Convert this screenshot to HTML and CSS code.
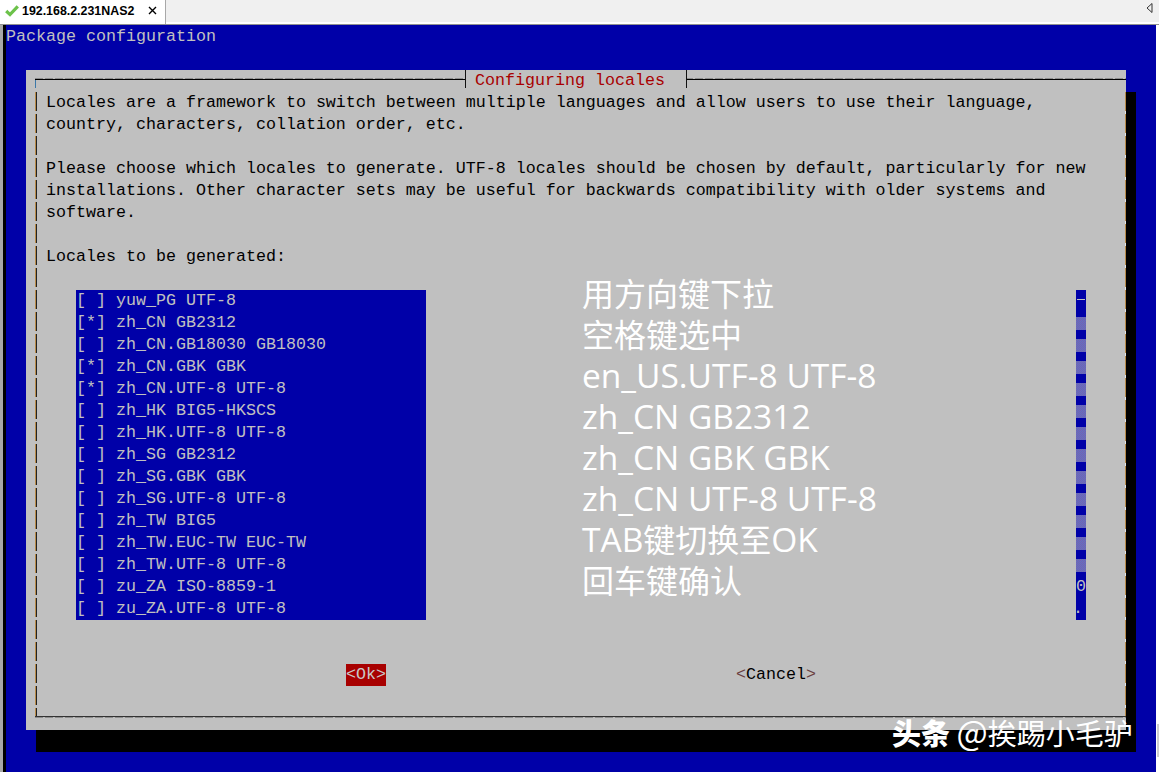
FILE: index.html
```html
<!DOCTYPE html>
<html lang="zh">
<head>
<meta charset="utf-8">
<title>192.168.2.231NAS2</title>
<link rel="stylesheet" href="styles.css">
</head>
<body>
<div class="tabbar">
  <div class="tab">
    <svg class="check" width="14" height="12" viewBox="0 0 14 12"><path d="M1.2 6 L5 9.6 L12.8 1.4" fill="none" stroke="#6cc24a" stroke-width="3.2"/></svg>
    <span class="tab-name">192.168.2.231NAS2</span>
    <svg class="close" width="9" height="9" viewBox="0 0 9 9"><path d="M1 1 L8 8 M8 1 L1 8" stroke="#000" stroke-width="1.4"/></svg>
  </div>
  <div class="tab-spacer"></div>
  <svg class="tab-arrow" width="7" height="10" viewBox="0 0 7 10"><path d="M6 .5 V9.5 L1 5 Z" fill="none" stroke="#333"/></svg>
</div>
<div class="window">
  <div class="terminal">
    <div class="pkg">Package configuration</div>
    <div class="dialog">
      <div class="frame">
        <div class="title"><span class="title-text">Configuring locales</span></div>
        <div class="msg">
          <div class="line">Locales are a framework to switch between multiple languages and allow users to use their language,</div>
          <div class="line">country, characters, collation order, etc.</div>
          <div class="line">&nbsp;</div>
          <div class="line">Please choose which locales to generate. UTF-8 locales should be chosen by default, particularly for new</div>
          <div class="line">installations. Other character sets may be useful for backwards compatibility with older systems and</div>
          <div class="line">software.</div>
          <div class="line">&nbsp;</div>
          <div class="line">Locales to be generated:</div>
        </div>
        <div class="list-row">
          <div class="list">
            <div class="line">[ ] yuw_PG UTF-8</div>
            <div class="line">[*] zh_CN GB2312</div>
            <div class="line">[ ] zh_CN.GB18030 GB18030</div>
            <div class="line">[*] zh_CN.GBK GBK</div>
            <div class="line">[*] zh_CN.UTF-8 UTF-8</div>
            <div class="line">[ ] zh_HK BIG5-HKSCS</div>
            <div class="line">[ ] zh_HK.UTF-8 UTF-8</div>
            <div class="line">[ ] zh_SG GB2312</div>
            <div class="line">[ ] zh_SG.GBK GBK</div>
            <div class="line">[ ] zh_SG.UTF-8 UTF-8</div>
            <div class="line">[ ] zh_TW BIG5</div>
            <div class="line">[ ] zh_TW.EUC-TW EUC-TW</div>
            <div class="line">[ ] zh_TW.UTF-8 UTF-8</div>
            <div class="line">[ ] zu_ZA ISO-8859-1</div>
            <div class="line">[ ] zu_ZA.UTF-8 UTF-8</div>
          </div>
          <div class="notes">
            <div class="note">用方向键下拉</div>
            <div class="note">空格键选中</div>
            <div class="note lat">en_US.UTF-8 UTF-8</div>
            <div class="note lat">zh_CN GB2312</div>
            <div class="note lat">zh_CN GBK GBK</div>
            <div class="note lat">zh_CN UTF-8 UTF-8</div>
            <div class="note"><span class="lat">TAB</span>键切换至<span class="lat">OK</span></div>
            <div class="note">回车键确认</div>
          </div>
          <div class="scroll">
            <div class="cell"><span class="tick"></span></div>
            <div class="cell shade"></div><div class="cell shade"></div><div class="cell shade"></div>
            <div class="cell shade"></div><div class="cell shade"></div><div class="cell shade"></div>
            <div class="cell shade"></div><div class="cell shade"></div><div class="cell shade"></div>
            <div class="cell shade"></div><div class="cell shade"></div><div class="cell shade"></div>
            <div class="cell digit">0</div>
            <div class="cell digit dot">.</div>
          </div>
        </div>
        <div class="buttons">
          <span class="btn btn-ok">&lt;Ok&gt;</span>
          <span class="btn btn-cancel"><i>&lt;</i>Cancel<i>&gt;</i></span>
        </div>
      </div>
    </div>
  </div>
  <div class="thumb"></div>
  <div class="watermark"><b>头条</b> <span class="at">@</span>挨踢小毛驴</div>
</div>
</body>
</html>
```
FILE: styles.css
```css
* { box-sizing: border-box; }
html, body { margin: 0; padding: 0; }
body {
  width: 1159px; height: 772px; overflow: hidden;
  background: #f0f0f0;
  font-family: "Liberation Mono", "DejaVu Sans Mono", monospace;
}
.tabbar {
  height: 25px; display: flex; align-items: flex-start;
  background: #f0f0f0; border-bottom: 1px solid #909090;
  box-shadow: inset 0 -2px 0 #fff;
}
.tab {
  width: 166px; height: 24px; background: #fff; border-right: 1px solid #a8a8a8;
  display: flex; align-items: center; padding: 0 0 3px 5px;
}
.check { flex: none; }
.tab-name {
  margin-left: 3px; width: 126px; white-space: nowrap;
  font: bold 12.4px "Liberation Sans", sans-serif; color: #000;
}
.close { flex: none; }
.tab-spacer { flex: 1; }
.tab-arrow { margin: 3px 6px 0 0; }
.window {
  position: relative; height: 747px; display: flex;
  background: #fff;
}
.terminal {
  width: 1156px; height: 747px; flex: none;
  background: #0000a8;
  border-left: 6px solid #000;
  padding-top: 1px;
  font-size: 16.667px; line-height: 22px; color: #000;
  position: relative;
}
.terminal::before {
  content: ""; position: absolute; left: -6px; top: 0; bottom: 0; width: 3px; background: #a8a8a8;
}
.line { height: 22px; white-space: pre; }
.pkg { height: 22px; color: #c0c0c0; white-space: pre; }
.dialog {
  width: 1100px; height: 660px; margin: 22px 0 0 20px;
  background: #c0c0c0; box-shadow: 10px 22px 0 #000;
  padding: 9px 0 0 9px;
}
.frame {
  position: relative; width: 1091px; height: 639px;
  padding: 12px 0 0 11px;
  border-top: 1px solid #000; border-bottom: 2px solid #333;
  background:
    linear-gradient(#3c78a8, #3c78a8) left 0 top 0 / 1px 8px no-repeat,
    repeating-linear-gradient(to bottom, #b88a48 0 19px, transparent 19px 22px) left 0 top 12px / 1px 100% no-repeat,
    repeating-linear-gradient(to bottom, #222 0 19px, transparent 19px 22px) left 1px top 12px / 1px 100% no-repeat,
    repeating-linear-gradient(to bottom, #b88a48 0 19px, #e4e4e4 19px 22px) right 0 top 12px / 1px 100% no-repeat;
}
.frame::before, .frame::after {
  content: ""; position: absolute; left: 0; right: 0; height: 1px;
  background: repeating-linear-gradient(to right, #8c8c8c 0 8px, #c0c0c0 8px 10px);
}
.frame::before { top: -2px; }
.frame::after { bottom: -2px; }
.title {
  position: absolute; left: 430px; top: -10px; width: 222px; height: 18px; z-index: 1;
  background: #c0c0c0; border-left: 1px solid #111; border-right: 1px solid #111;
  padding-left: 9px; line-height: 21px;
}
.title-text { color: #a80000; white-space: pre; }
.msg { height: 176px; }
.list-row { display: flex; margin-top: 22px; margin-left: 30px; height: 330px; }
.list {
  flex: none; width: 350px; height: 330px; background: #0000a8; color: #c0c0c0;
}
.notes {
  flex: none; width: 494px; margin-left: 156px; margin-top: -17px; height: 347px;
  font-family: "Open Sans", "Noto Sans CJK SC", sans-serif;
  color: #fff; font-size: 32px; line-height: 41px;
}
.note { height: 41px; white-space: nowrap; }
.lat { font-size: 33.5px; }
.scroll { flex: none; width: 10px; background: #0000a8; color: #c0c0c0; }
.cell { height: 22px; position: relative; }
.shade {
  padding: 5px 0 4px;
  background: repeating-conic-gradient(#7c5cae 0 25%, #5a76c4 0 50%) 0 0 / 2px 2px content-box;
}
.tick { position: absolute; left: 1px; top: 9px; width: 8px; height: 1px; background: #c0c0c0; }
.digit { text-align: center; }
.dot { text-indent: -6px; }
.buttons { position: relative; height: 22px; margin-top: 44px; }
.btn { position: absolute; top: 0; height: 22px; white-space: pre; }
.btn-ok { left: 300px; width: 40px; background: #a80000; color: #c8c8c8; }
.btn-cancel { left: 690px; color: #000; }
.btn-cancel i { font-style: normal; color: #6a4040; }
.thumb { position: absolute; right: 0; top: 699px; width: 2px; height: 33px; background: #cfcfcf; }
.watermark {
  position: absolute; left: 892px; top: 686px;
  font-family: "Noto Sans CJK SC", sans-serif; font-size: 29px; line-height: 40px;
  color: #fff; white-space: pre;
}
.watermark b { font-weight: 900; }
.at { font-size: 33px; }
```
